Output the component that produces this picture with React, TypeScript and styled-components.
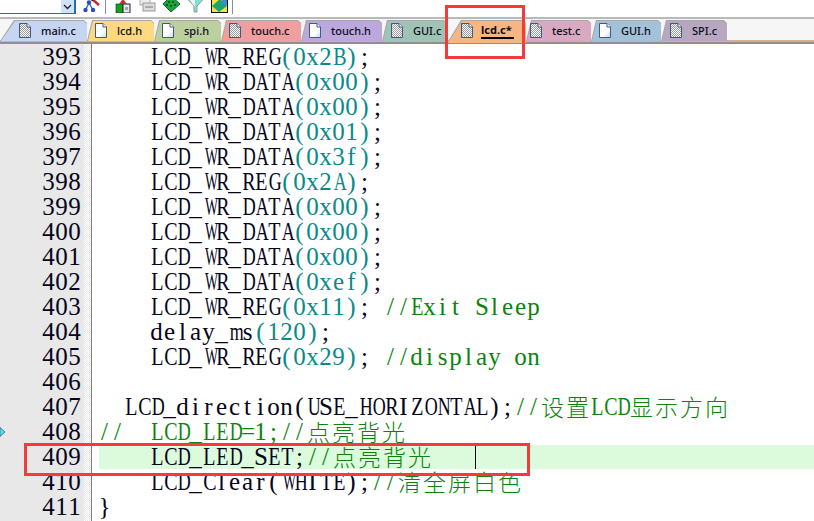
import React from "react";
import styled, { createGlobalStyle } from "styled-components";

const Global = createGlobalStyle`
  html, body { margin: 0; padding: 0; background: #fff; }
  body { width: 814px; height: 521px; overflow: hidden; }
`;

const Page = styled.div`
  position: relative;
  width: 814px;
  height: 521px;
  overflow: hidden;
  background: #fff;
  display: flex;
  flex-direction: column;
`;

const Toolbar = styled.div`
  height: 17px;
  flex: none;
  display: flex;
  align-items: center;
  background: #fff;
`;

const Combo = styled.div`
  width: 76px;
  height: 14px;
  margin-top: -3px;
  box-sizing: border-box;
  border-right: 2px solid #1a6fc4;
  border-bottom: 1px solid #1a6fc4;
  display: flex;
  justify-content: flex-end;
`;

const ComboArrow = styled.div`
  width: 13px;
  height: 13px;
  background: #cde4f7;
  display: flex;
  align-items: center;
  justify-content: center;
`;

const ToolGroup = styled.div<{ $ml: number }>`
  display: flex;
  align-items: center;
  gap: 7px;
  margin-left: ${(p) => p.$ml}px;
`;

const ToolSep = styled.div<{ $ml: number }>`
  width: 1px;
  height: 14px;
  margin-top: -3px;
  margin-left: ${(p) => p.$ml}px;
  background: #8d8d8d;
`;

const ToolIcon = styled.svg`
  flex: none;
  margin-top: -5px;
`;

const TabStrip = styled.div`
  flex: none;
  height: 27px;
  box-sizing: border-box;
  background: #f6f6f6;
  border-top: 2px solid #b9b9b9;
  border-bottom: 2px solid #8f8f8f;
  display: flex;
  align-items: flex-start;
  box-shadow: inset 0 -2px 0 #d4b48f;
`;

const Tab = styled.div<{ $color: string; $w: number; $pad: number; $active?: boolean; $slant?: number }>`
  position: relative;
  flex: none;
  width: ${(p) => p.$w}px;
  height: ${(p) => (p.$active ? 23 : 21)}px;
  margin-top: 1px;
  box-sizing: border-box;
  padding-left: ${(p) => p.$pad}px;
  padding-bottom: ${(p) => (p.$active ? 3 : 1)}px;
  display: flex;
  align-items: center;
  gap: 10px;
  background: #a8a8a8;
  clip-path: polygon(0 100%, ${(p) => p.$slant ?? 5}px 0, calc(100% - 3px) 0, 100% 3px, 100% 100%);
  font-family: "Noto Sans", sans-serif;
  font-size: 11px;
  font-weight: ${(p) => (p.$active ? 700 : 500)};
  color: #0c0c18;

  &::before {
    content: "";
    position: absolute;
    inset: 1px 0 0 1px;
    background: ${(p) => p.$color};
    clip-path: polygon(0 100%, ${(p) => p.$slant ?? 5}px 0, calc(100% - 3px) 0, 100% 3px, 100% 100%);
  }
  & > * { position: relative; }
`;

const DocSvg = styled.svg`
  flex: none;
`;

const ActiveName = styled.span`
  border-bottom: 2px solid #000;
  padding: 0 2px 0 0;
  margin-left: -2px;
  line-height: 15px;
`;

const Editor = styled.div`
  flex: 1;
  display: flex;
  min-height: 0;
`;

const Gutter = styled.div`
  flex: none;
  width: 84px;
  background: #e8e8e8;
  padding-top: 1px;
`;

const Dither = styled.div`
  flex: none;
  width: 7px;
  background-color: #fff;
  background-image: conic-gradient(#e6e6e6 25%, #fff 0 50%, #e6e6e6 0 75%, #fff 0);
  background-size: 2px 2px;
  border-right: 1px solid #7f7f7f;
`;

const Code = styled.div`
  flex: 1;
  padding-top: 1px;
  padding-left: 7px;
`;

const Row = styled.div<{ $hl?: boolean }>`
  position: relative;
  z-index: ${(p) => (p.$hl ? 0 : 1)};
  height: 25px;
  line-height: 25px;
  white-space: pre;
  background: ${(p) => (p.$hl ? "linear-gradient(#dcfbdc, #dcfbdc) 0 0 / 100% 24px no-repeat" : "transparent")};
`;

const RowText = styled.div`
  display: flex;
  align-items: center;
  height: 25px;
  margin-left: -1px;
`;

const LineNo = styled.div`
  height: 25px;
  display: flex;
  justify-content: flex-end;
  align-items: center;
  padding-right: 3px;
`;

const colors: Record<string, string> = {
  code: "#04041a",
  num: "#0a8a8a",
  com: "#0b840b",
};

const Cell = styled.span<{ $kind: string; $sx: number }>`
  flex: none;
  display: inline-block;
  width: 13px;
  text-align: center;
  font-family: "Liberation Serif", serif;
  font-size: 25px;
  line-height: 25px;
  color: ${(p) => colors[p.$kind]};
  transform: translateY(-1px) scaleX(${(p) => p.$sx});
`;

const Han = styled.span<{ $kind: string }>`
  flex: none;
  display: inline-block;
  width: 25px;
  text-align: center;
  font-family: "Noto Sans CJK SC", sans-serif;
  font-size: 23px;
  font-weight: 300;
  line-height: 25px;
  color: ${(p) => colors[p.$kind]};
  transform: translateY(-1px);
`;

const Caret = styled.div`
  position: absolute;
  left: 376px;
  top: 1px;
  width: 1px;
  height: 23px;
  background: #000;
`;

const Breakpoint = styled.svg`
  position: absolute;
  left: 0;
  top: 427px;
`;

const RedBox = styled.div<{ $x: number; $y: number; $w: number; $h: number }>`
  position: absolute;
  z-index: 2;
  left: ${(p) => p.$x}px;
  top: ${(p) => p.$y}px;
  width: ${(p) => p.$w}px;
  height: ${(p) => p.$h}px;
  box-sizing: border-box;
  border: 3px solid #f43b3b;
`;

const Watermark = styled.span`
  position: absolute;
  transform: translate(-50%, -50%) rotate(-45deg);
  font-family: "Liberation Serif", serif;
  font-size: 24px;
  white-space: nowrap;
  color: rgba(0, 0, 0, 0.022);
  pointer-events: none;
`;

const scaleFor = (c: string) => {
  if ("WM".includes(c)) return 0.55;
  if ("m".includes(c) || c === "w") return 0.72;
  if ("DGHANOQUVXY".includes(c)) return 0.72;
  if ("CRBETLZPFK".includes(c)) return 0.8;
  return 1;
};

const isHan = (c: string) => c.charCodeAt(0) > 0x2e7f;

const Text = ({ text, kind }: { text: string; kind: string }) => (
  <>
    {Array.from(text).map((c, i) =>
      isHan(c) ? (
        <Han key={i} $kind={kind}>{c}</Han>
      ) : (
        <Cell key={i} $kind={kind} $sx={scaleFor(c)}>{c === " " ? "\u00a0" : c}</Cell>
      )
    )}
  </>
);

type Seg = [string, string];
const data = (v: string): Seg[] => [["    LCD_WR_DATA", "code"], [`(${v})`, "num"], [";", "code"]];
const reg = (v: string): Seg[] => [["    LCD_WR_REG", "code"], [`(${v})`, "num"], [";", "code"]];

const lines: { n: number; segs: Seg[]; hl?: boolean }[] = [
  { n: 393, segs: reg("0x2B") },
  { n: 394, segs: data("0x00") },
  { n: 395, segs: data("0x00") },
  { n: 396, segs: data("0x01") },
  { n: 397, segs: data("0x3f") },
  { n: 398, segs: reg("0x2A") },
  { n: 399, segs: data("0x00") },
  { n: 400, segs: data("0x00") },
  { n: 401, segs: data("0x00") },
  { n: 402, segs: data("0xef") },
  { n: 403, segs: [...reg("0x11"), [" ", "code"], ["//Exit Sleep", "com"]] },
  { n: 404, segs: [["    delay_ms", "code"], ["(120)", "num"], [";", "code"]] },
  { n: 405, segs: [...reg("0x29"), [" ", "code"], ["//display on", "com"]] },
  { n: 406, segs: [] },
  { n: 407, segs: [["  LCD_direction(USE_HORIZONTAL);", "code"], ["//设置LCD显示方向", "com"]] },
  { n: 408, segs: [["//  LCD_LED=1;//点亮背光", "com"]] },
  { n: 409, segs: [["    LCD_LED_SET;", "code"], ["//点亮背光", "com"]], hl: true },
  { n: 410, segs: [["    LCD_Clear(WHITE);", "code"], ["//清全屏白色", "com"]] },
  { n: 411, segs: [["}", "code"]] },
];

const tabs = [
  { name: "main.c", color: "#c6d5f1", w: 87, pad: 19, hatch: true, slant: 14 },
  { name: "lcd.h", color: "#fdd981", w: 67, pad: 8 },
  { name: "spi.h", color: "#bccf9f", w: 67, pad: 8 },
  { name: "touch.c", color: "#ef9f9f", w: 80, pad: 8, hatch: true },
  { name: "touch.h", color: "#bba9dd", w: 81, pad: 8, hatch: false },
  { name: "GUI.c", color: "#9fc3b5", w: 65, pad: 9, hatch: true },
  { name: "lcd.c*", color: "#f7b681", w: 79, pad: 14, hatch: true, active: true, slant: 14 },
  { name: "test.c", color: "#d8a9c1", w: 65, pad: 4, hatch: true },
  { name: "GUI.h", color: "#a3c2d9", w: 70, pad: 8 },
  { name: "SPI.c", color: "#b7a7c0", w: 66, pad: 9, hatch: true },
];

const DocIcon = ({ hatch }: { hatch?: boolean }) => {
  const id = hatch ? "docHatch" : "docPlain";
  return (
    <DocSvg width="12" height="15" viewBox="0 0 12 15">
      <defs>
        <pattern id="docHatch" width="2" height="2" patternUnits="userSpaceOnUse">
          <rect width="2" height="2" fill="#fff" />
          <rect width="1" height="1" fill="#9a9a9a" />
          <rect x="1" y="1" width="1" height="1" fill="#9a9a9a" />
        </pattern>
        <linearGradient id="docPlain" x1="0" y1="0" x2="1" y2="1">
          <stop offset="0" stopColor="#fff" />
          <stop offset="0.6" stopColor="#fff" />
          <stop offset="1" stopColor="#c8d4ea" />
        </linearGradient>
      </defs>
      <path d="M0.5 0.5H8L11.5 4V14.5H0.5Z" fill={`url(#${id})`} stroke="#3f5a86" />
      <path d="M8 0.5V4H11.5" fill="#fff" stroke="#3f5a86" />
    </DocSvg>
  );
};

const Ic = ({ children }: { children: React.ReactNode }) => (
  <ToolIcon width="17" height="14" viewBox="0 0 17 14">
    {children}
  </ToolIcon>
);

const watermarks = (() => {
  const labels = ["14F-zbj", "2023-06-13", "10:51"];
  const out: { x: number; y: number; t: string }[] = [];
  for (let i = -6; i < 8; i++) {
    for (let j = -8; j < 10; j++) {
      const x = 510 + 165 * i + 87 * j;
      const y = 205 + 11 * i + 86 * j;
      if (x > -40 && x < 860 && y > 40 && y < 560) {
        out.push({ x, y, t: labels[((i % 3) + 3) % 3] });
      }
    }
  }
  return out;
})();

export default function App() {
  return (
    <Page>
      <Global />
      <Toolbar>
        <Combo>
          <ComboArrow>
            <svg width="9" height="6" viewBox="0 0 9 6">
              <path d="M1 1L4.5 4.5L8 1" fill="none" stroke="#222" strokeWidth="1.3" />
            </svg>
          </ComboArrow>
        </Combo>
        <ToolGroup $ml={7}>
          <Ic>
            <path d="M6 4L2.5 11M6 4L10 11" stroke="#2a50b8" strokeWidth="1.2" />
            <circle cx="6" cy="3.5" r="2.2" fill="#2a50b8" />
            <circle cx="2.5" cy="11" r="2.2" fill="#2a50b8" />
            <circle cx="10" cy="11" r="2.2" fill="#2a50b8" />
            <path d="M9 0L16 6" stroke="#c22" strokeWidth="2.4" />
            <path d="M7 -1L10 1.5" stroke="#111" strokeWidth="2" />
          </Ic>
        </ToolGroup>
        <ToolSep $ml={5} />
        <ToolGroup $ml={9}>
          <Ic>
            <rect x="1" y="5" width="7" height="9" fill="#18a018" stroke="#123" strokeWidth="0.6" />
            <rect x="8" y="5" width="7" height="9" fill="#dfe7ef" stroke="#223" />
            <path d="M4 5L8 0L12 5Z" fill="#c42d2d" />
            <rect x="10" y="8" width="3" height="3" fill="#9aa" />
          </Ic>
          <Ic>
            <rect x="1" y="0" width="10" height="6" fill="#eee" stroke="#aaa" />
            <rect x="4" y="4" width="12" height="8" fill="#ddd" stroke="#999" />
            <rect x="6" y="7" width="8" height="2" fill="#aaa" />
          </Ic>
          <Ic>
            <path d="M8 -3L17 5L8 13L0 5Z" fill="#19a832" stroke="#063" />
            <circle cx="6" cy="3" r="1" fill="#033" />
            <circle cx="10" cy="3" r="1" fill="#033" />
            <circle cx="4" cy="6" r="1" fill="#033" />
            <circle cx="8" cy="7" r="1" fill="#033" />
            <circle cx="12" cy="6" r="1" fill="#033" />
          </Ic>
          <Ic>
            <path d="M0.5 0H16.5L10 7V13H7V7Z" fill="#7fe0d8" stroke="#999" />
            <path d="M3 1H8V7H7Z" fill="#e8f8f8" />
          </Ic>
          <Ic>
            <rect x="0.5" y="0" width="16" height="13.5" fill="#f4e04a" stroke="#111" />
            <path d="M9 0L16 7L8 13L1 7Z" fill="#19a870" />
            <rect x="11" y="1" width="5" height="5" fill="#3a8ad8" />
          </Ic>
        </ToolGroup>
        <ToolSep $ml={4} />
      </Toolbar>

      <TabStrip>
        {tabs.map((t) => (
          <Tab key={t.name} $color={t.color} $w={t.w} $pad={t.pad} $active={t.active} $slant={t.slant}>
            <DocIcon hatch={t.hatch} />
            {t.active ? <ActiveName>{t.name}</ActiveName> : <span>{t.name}</span>}
          </Tab>
        ))}
      </TabStrip>

      <Editor>
        <Gutter>
          {lines.map((l) => (
            <LineNo key={l.n}>
              <Text text={String(l.n)} kind="code" />
            </LineNo>
          ))}
        </Gutter>
        <Dither />
        <Code>
          {lines.map((l) => (
            <Row key={l.n} $hl={l.hl}>
              <RowText>
                {l.segs.map((s, i) => (
                  <Text key={i} text={s[0]} kind={s[1]} />
                ))}
              </RowText>
              {l.hl && <Caret />}
            </Row>
          ))}
        </Code>
      </Editor>

      {watermarks.map((w, i) => (
        <Watermark key={i} style={{ left: w.x, top: w.y }}>{w.t}</Watermark>
      ))}

      <Breakpoint width="6" height="10" viewBox="0 0 6 10">
        <path d="M0 0.5L5 5L0 9.5Z" fill="#52e0f0" stroke="#357" strokeWidth="0.7" />
      </Breakpoint>
      <RedBox $x={445} $y={5} $w={80} $h={54} />
      <RedBox $x={24} $y={443} $w={506} $h={33} />
    </Page>
  );
}
